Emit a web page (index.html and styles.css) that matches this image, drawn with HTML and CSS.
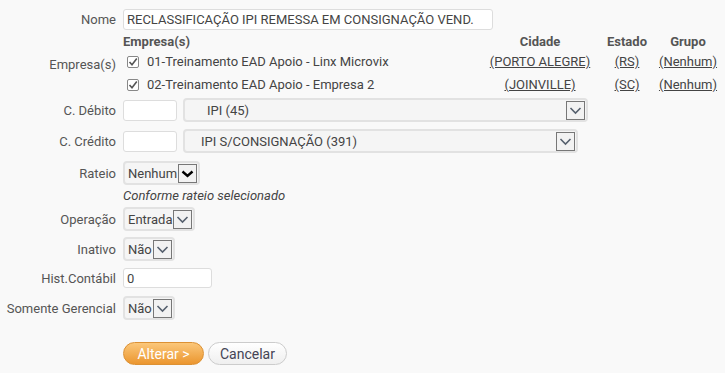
FILE: index.html
```html
<!DOCTYPE html>
<html lang="pt-BR">
<head>
  <meta charset="UTF-8" />
  <title>Alterar Lançamento Padrão</title>
  <link rel="stylesheet" href="styles.css">
</head>
<body>
  <form class="edit-form">
    <div class="row row-nome">
      <label class="lbl">Nome</label>
      <input type="text" class="txt txt-nome" value="RECLASSIFICAÇÃO IPI REMESSA EM CONSIGNAÇÃO VEND." />
    </div>

    <div class="row row-emp">
      <label class="lbl">Empresa(s)</label>
      <table class="emp-table">
        <tr>
          <th class="c-emp">Empresa(s)</th>
          <th class="c-cid">Cidade</th>
          <th class="c-est">Estado</th>
          <th class="c-grp">Grupo</th>
        </tr>
        <tr>
          <td class="c-emp"><span class="chk"><svg width="10" height="10" viewBox="0 0 10 10"><path d="M1.5 5 L4 7.8 L8.8 1.6" fill="none" stroke="#555" stroke-width="1.6"/></svg></span>01-Treinamento EAD Apoio - Linx Microvix</td>
          <td class="c-cid"><a href="#">(PORTO ALEGRE)</a></td>
          <td class="c-est"><a href="#">(RS)</a></td>
          <td class="c-grp"><a href="#">(Nenhum)</a></td>
        </tr>
        <tr>
          <td class="c-emp"><span class="chk"><svg width="10" height="10" viewBox="0 0 10 10"><path d="M1.5 5 L4 7.8 L8.8 1.6" fill="none" stroke="#555" stroke-width="1.6"/></svg></span>02-Treinamento EAD Apoio - Empresa 2</td>
          <td class="c-cid"><a href="#">(JOINVILLE)</a></td>
          <td class="c-est"><a href="#">(SC)</a></td>
          <td class="c-grp"><a href="#">(Nenhum)</a></td>
        </tr>
      </table>
    </div>

    <div class="row row-deb">
      <label class="lbl">C. Débito</label>
      <div class="pair">
        <input type="text" class="txt txt-code" />
        <div class="sel sel-deb">
          <span class="sel-text">IPI (45)</span>
          <span class="sel-arrow"><svg width="17" height="17" viewBox="0 0 17 17"><path d="M3.5 6 L8.5 11 L13.5 6" fill="none" stroke="#56606e" stroke-width="1.6"/></svg></span>
        </div>
      </div>
    </div>

    <div class="row row-cred">
      <label class="lbl">C. Crédito</label>
      <div class="pair">
        <input type="text" class="txt txt-code" />
        <div class="sel sel-cred">
          <span class="sel-text">IPI S/CONSIGNAÇÃO (391)</span>
          <span class="sel-arrow"><svg width="17" height="17" viewBox="0 0 17 17"><path d="M3.5 6 L8.5 11 L13.5 6" fill="none" stroke="#56606e" stroke-width="1.6"/></svg></span>
        </div>
      </div>
    </div>

    <div class="row row-rateio">
      <label class="lbl">Rateio</label>
      <div class="sel sel-small">
        <span class="sel-text">Nenhum</span>
        <span class="sel-arrow arrow-dark"><svg width="17" height="17" viewBox="0 0 17 17"><path d="M3.5 6.5 L8.5 11 L13.5 6.5" fill="none" stroke="#000" stroke-width="2.4"/></svg></span>
      </div>
    </div>

    <div class="row row-note">
      <span class="lbl"></span>
      <em class="note">Conforme rateio selecionado</em>
    </div>

    <div class="row row-oper">
      <label class="lbl">Operação</label>
      <div class="sel sel-small">
        <span class="sel-text">Entrada</span>
        <span class="sel-arrow"><svg width="17" height="17" viewBox="0 0 17 17"><path d="M3.5 6 L8.5 11 L13.5 6" fill="none" stroke="#56606e" stroke-width="1.6"/></svg></span>
      </div>
    </div>

    <div class="row row-inat">
      <label class="lbl">Inativo</label>
      <div class="sel sel-small">
        <span class="sel-text">Não</span>
        <span class="sel-arrow"><svg width="17" height="17" viewBox="0 0 17 17"><path d="M3.5 6 L8.5 11 L13.5 6" fill="none" stroke="#56606e" stroke-width="1.6"/></svg></span>
      </div>
    </div>

    <div class="row row-hist">
      <label class="lbl">Hist.Contábil</label>
      <input type="text" class="txt txt-hist" value="0" />
    </div>

    <div class="row row-ger">
      <label class="lbl">Somente Gerencial</label>
      <div class="sel sel-small">
        <span class="sel-text">Não</span>
        <span class="sel-arrow"><svg width="17" height="17" viewBox="0 0 17 17"><path d="M3.5 6 L8.5 11 L13.5 6" fill="none" stroke="#56606e" stroke-width="1.6"/></svg></span>
      </div>
    </div>

    <div class="row row-btns">
      <span class="lbl"></span>
      <div class="btns">
        <button type="button" class="btn btn-primary">Alterar &gt;</button>
        <button type="button" class="btn btn-cancel">Cancelar</button>
      </div>
    </div>
  </form>
</body>
</html>
```

FILE: styles.css
```css
body {
  margin: 0;
  font-family: Roboto, "Liberation Sans", sans-serif;
  font-size: 13px;
  background-color: #f9f9f9;
  color: #444;
}
.edit-form {
  display: flex;
  flex-direction: column;
  padding-top: 9px;
}
.row {
  display: grid;
  grid-template-columns: 116px auto;
  column-gap: 7px;
  align-items: center;
  justify-content: start;
}
.lbl {
  text-align: right;
  color: #555;
}
.txt {
  box-sizing: border-box;
  font: inherit;
  color: #444;
  background: #fff;
  border: 1px solid #ddd;
  border-radius: 3px;
  padding: 0 3px;
  margin: 0;
  outline: none;
}
.txt-nome {
  width: 370px;
  height: 21px;
}
.txt-code {
  width: 54px;
  height: 21px;
}
.txt-hist {
  width: 89px;
  height: 20px;
}

/* empresas */
.row-emp {
  margin-top: 2px;
}
.emp-table {
  border-collapse: collapse;
  width: 596px;
}
.emp-table th {
  height: 18px;
  padding: 0;
  font-weight: 700;
  color: #555;
}
.emp-table td {
  height: 23px;
  padding: 0;
  white-space: nowrap;
}
.c-emp {
  text-align: left;
  width: 360px;
}
.c-cid {
  text-align: center;
  width: 114px;
}
.c-est {
  text-align: center;
  width: 60px;
}
.c-grp {
  text-align: center;
}
.emp-table a {
  color: #444;
  text-decoration: underline;
}
.chk {
  display: inline-flex;
  align-items: center;
  justify-content: center;
  box-sizing: border-box;
  width: 12px;
  height: 12px;
  border: 1px solid #888;
  border-radius: 2px;
  background: #fff;
  margin: 0 8px 0 4px;
  vertical-align: -1px;
}

/* selects */
.pair {
  display: flex;
  align-items: center;
  gap: 6px;
}
.sel {
  box-sizing: border-box;
  display: flex;
  align-items: center;
  height: 24px;
  background: #f5f5f5;
  border: 2px solid #e2e2e2;
  border-radius: 4px;
  padding: 0 1px 0 3px;
}
.sel-deb {
  width: 405px;
  padding-left: 22px;
}
.sel-cred {
  width: 395px;
  padding-left: 16px;
}
.sel-text {
  flex: 1;
  white-space: nowrap;
}
.sel-arrow {
  box-sizing: border-box;
  display: flex;
  align-items: center;
  justify-content: center;
  width: 19px;
  height: 19px;
  border: 1px solid #777;
  background: #f2f2f2;
  margin-left: 1px;
}
.row-deb {
  margin-top: 2px;
}
.row-cred {
  margin-top: 7px;
}
.row-rateio {
  margin-top: 8px;
}
.row-note {
  height: 20px;
}
.note {
  color: #444;
}
.row-oper {
  margin-top: 2px;
}
.row-inat {
  margin-top: 6px;
}
.row-hist {
  margin-top: 7px;
}
.row-ger {
  margin-top: 8px;
}

/* buttons */
.row-btns {
  margin-top: 22px;
}
.btns {
  display: flex;
  gap: 4px;
}
.btn {
  box-sizing: border-box;
  height: 23px;
  font: inherit;
  font-size: 14px;
  border-radius: 12px;
  cursor: pointer;
  padding: 0;
}
.btn-primary {
  width: 81px;
  color: #fff;
  background: linear-gradient(#fbc77a, #eb962f);
  border: 1px solid #dc9134;
}
.btn-cancel {
  width: 79px;
  color: #445;
  background: linear-gradient(#fff, #efefef);
  border: 1px solid #ccc;
}
```
